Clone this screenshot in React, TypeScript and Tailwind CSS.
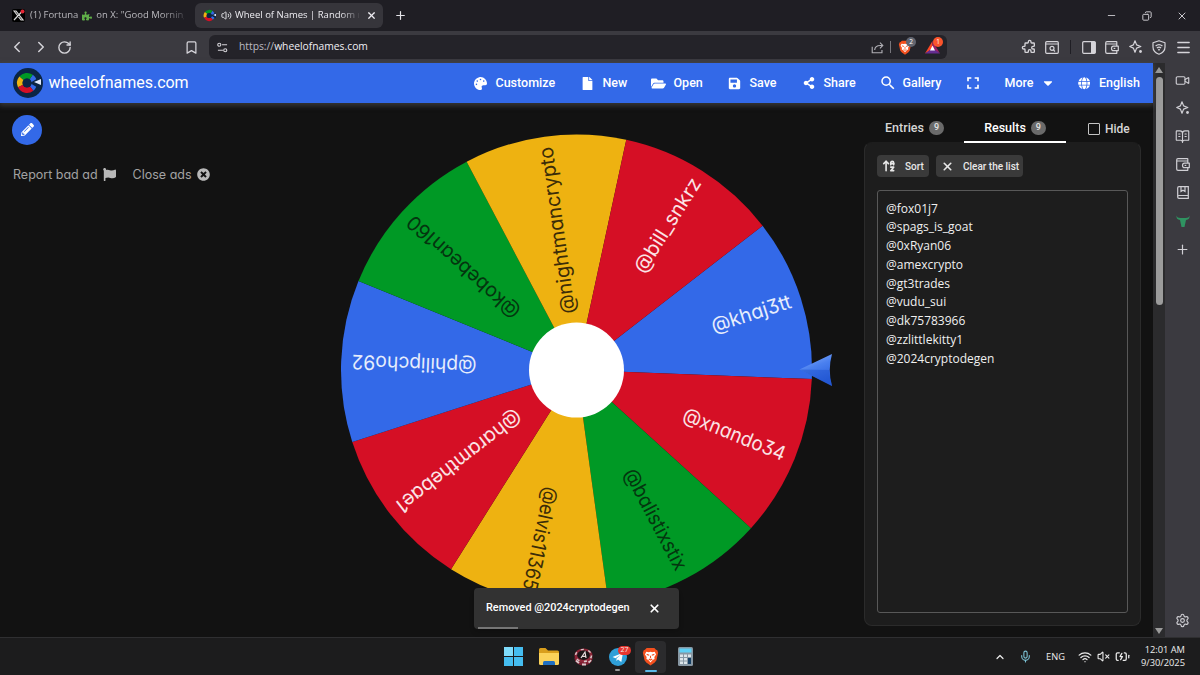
import React, { useState } from 'react';
import {
  ArrowUpAZ,
  BatteryCharging,
  BookOpenText,
  Bookmark,
  ChevronLeft,
  ChevronRight,
  ChevronUp,
  Copy,
  Menu,
  Mic,
  Minus,
  Plus,
  RotateCw,
  Settings,
  Video,
  Volume2,
  VolumeX,
  Wallet,
  Wifi,
  X,
} from 'lucide-react';
import { MdFullscreen, MdSearch } from 'react-icons/md';
import { HiOutlinePuzzle } from 'react-icons/hi';
import {
  FaCaretDown,
  FaFile,
  FaFlag,
  FaFolderOpen,
  FaGlobe,
  FaPalette,
  FaPencilAlt,
  FaPuzzlePiece,
  FaSave,
  FaShareAlt,
  FaTimesCircle,
} from 'react-icons/fa';
import clsx from 'clsx';

interface Slice {
  name: string;
  fill: string;
  ink: string;
  length: number;
}

const BLUE = '#3369e8';
const RED = '#d50f25';
const GREEN = '#009925';
const YELLOW = '#eeb211';

const CX = 236.5;
const CY = 236;
const R = 235.5;
const STEP = 40;
const START = -37.8;

const slices: Slice[] = [
  { name: '@khaj3tt', fill: BLUE, ink: '#e6edfc', length: 83 },
  { name: '@xnando34', fill: RED, ink: '#fbe3e6', length: 109 },
  { name: '@balistixstix', fill: GREEN, ink: '#04350f', length: 112 },
  { name: '@elvis11365', fill: YELLOW, ink: '#3b2c08', length: 105 },
  { name: '@haramthebae1', fill: RED, ink: '#fbe3e6', length: 153 },
  { name: '@philipcho92', fill: BLUE, ink: '#e6edfc', length: 125 },
  { name: '@kobebean160', fill: GREEN, ink: '#04350f', length: 144 },
  { name: '@nightmancrypto', fill: YELLOW, ink: '#3b2c08', length: 168 },
  { name: '@bill_snkrz', fill: RED, ink: '#fbe3e6', length: 108 },
];

const results = [
  '@fox01j7',
  '@spags_is_goat',
  '@0xRyan06',
  '@amexcrypto',
  '@gt3trades',
  '@vudu_sui',
  '@dk75783966',
  '@zzlittlekitty1',
  '@2024cryptodegen',
];

const point = (deg: number) => {
  const rad = (deg * Math.PI) / 180;
  return `${(CX + R * Math.cos(rad)).toFixed(2)} ${(CY + R * Math.sin(rad)).toFixed(2)}`;
};

const Wheel = () => (
  <svg width="496" height="472" viewBox="0 0 496 472" className="block shrink-0">
    <defs>
      <linearGradient id="pointer" x1="0" y1="0" x2="0.4" y2="1">
        <stop offset="0" stopColor="#8fb4fb" />
        <stop offset="0.5" stopColor="#4a80ef" />
        <stop offset="1" stopColor="#2a60dd" />
      </linearGradient>
    </defs>
    {slices.map((s, i) => {
      const a = START + i * STEP;
      return (
        <path
          key={s.name}
          d={`M${CX} ${CY}L${point(a)}A${R} ${R} 0 0 1 ${point(a + STEP)}Z`}
          fill={s.fill}
        />
      );
    })}
    {slices.map((s, i) => (
      <text
        key={s.name}
        x={CX + 225}
        y={CY + 6.5}
        textAnchor="end"
        textLength={s.length}
        lengthAdjust="spacingAndGlyphs"
        transform={`rotate(${START + i * STEP + STEP / 2} ${CX} ${CY})`}
        fill={s.ink}
        className="font-['Inter',sans-serif] text-[20px] [font-feature-settings:'cv11','cv09']"
      >
        {s.name}
      </text>
    ))}
    <circle cx={CX} cy={CY} r="47.5" fill="#fff" />
    <path d="M459.500 235.500L492 220Q487.500 236 492 252Z" fill="url(#pointer)" />
    <path d="M459.500 235.500L492 252Q489.500 244 489.300 236Z" fill="#1c4fc9" opacity="0.45" />
  </svg>
);

const WheelLogo = ({ size, dark = true }: { size: number; dark?: boolean }) => (
  <svg width={size} height={size} viewBox={dark ? '0 0 30 30' : '3 4 23 22'} className="shrink-0">
    {dark && <circle cx="15" cy="15" r="15" fill="#0b2545" />}
    <g fill="none" strokeWidth="5.600">
      <path d="M18.100 9.100A7.200 7.200 0 0 1 18.600 20.500" stroke={BLUE} />
      <path d="M8.500 10.400A7.200 7.200 0 0 1 18.100 9.100" stroke={GREEN} />
      <path d="M7.500 18A7.200 7.200 0 0 1 8.500 10.400" stroke={YELLOW} />
      <path d="M18.600 20.500A7.200 7.200 0 0 1 7.500 18" stroke={RED} />
    </g>
    <circle cx="14" cy="15" r="4.600" fill="#0b2545" />
    <path d="M17 15L26 9.500V20.500Z" fill="#0b2545" />
    <path d="M21 14L28 11V17Z" fill="#dfe9ff" />
  </svg>
);

const BraveLion = ({ className }: { className?: string }) => (
  <svg viewBox="0 0 20 22" className={className}>
    <path d="M5.500 1h9l2 2 1.500 0.500 1 3-0.500 2-1.500 7-2 2.500-5 3.500-5-3.500-2-2.500-1.500-7L1 6.500l1-3L3.500 3z" fill="#f4501e" />
    <path d="M5 5.500l3 0.500 2-0.500 2 0.500 3-0.500 1.500 3-2 3 0.300 2.500-2.300 1-2.500 3-2.500-3-2.300-1 0.300-2.500-2-3z" fill="#fff" />
    <path d="M5.500 8.500l3 1M14.500 8.500l-3 1M10 10v3M8 14l2 1.200 2-1.200" stroke="#f4501e" strokeWidth="1.300" fill="none" />
  </svg>
);

const Slot = ({ className, children }: { className?: string; children?: React.ReactNode }) => (
  <div className={clsx('flex shrink-0 items-center justify-center', className)}>{children}</div>
);

const TabStrip = () => (
  <div className="flex h-[31px] shrink-0 items-center bg-[#1f1e24] text-[9.500px]">
    <div className="ml-3 flex w-[183px] items-center">
      <svg width="13" height="13" viewBox="0 0 13 13" className="mr-[5px] shrink-0">
        <rect width="13" height="13" rx="2" fill="#000" />
        <path d="M2 2l7 9h2L4 2zM10.500 2L2 11" stroke="#d8d8d8" strokeWidth="1.200" fill="none" />
        <circle cx="10.500" cy="2.500" r="2" fill="#e32636" />
      </svg>
      <div className="flex w-[154px] items-center whitespace-pre text-[#b9b8bd] [mask-image:linear-gradient(90deg,#000_85%,rgba(0,0,0,0.250))]">
        <span>(1) Fortuna</span>
        <FaPuzzlePiece className="mx-1 size-[10px] shrink-0 text-[#5fae48]" />
        <span>on X: "Good Morning</span>
      </div>
    </div>
    <div className="flex h-[25px] w-[188px] items-center rounded-md bg-[#36353b] pl-2 text-[#eeedf2]">
      <WheelLogo size={13} dark={false} />
      <Volume2 className="ml-[5px] size-[11px] shrink-0" />
      <span className="ml-[3px] w-[124px] whitespace-nowrap [mask-image:linear-gradient(90deg,#000_85%,rgba(0,0,0,0.100))]">
        Wheel of Names | Random na
      </span>
      <X className="ml-[7px] size-[11px] shrink-0" strokeWidth={2.6} />
    </div>
    <Plus className="ml-[11px] size-[13px] text-[#e4e3e8]" strokeWidth={2.2} />
    <div className="ml-auto flex items-center pr-0.5 text-[#c8c7cc]">
      <Slot className="w-[35px]"><Minus className="size-[11px]" strokeWidth={2} /></Slot>
      <Slot className="w-9"><Copy className="size-[10px] -scale-x-100" strokeWidth={2.4} /></Slot>
      <Slot className="w-[33px]"><X className="size-3" strokeWidth={2} /></Slot>
    </div>
  </div>
);

const Toolbar = () => (
  <div className="flex h-8 shrink-0 items-center bg-[#3b3a40] text-[#d5d4d9]">
    <Slot className="ml-[5px] w-6"><ChevronLeft className="size-[18px]" /></Slot>
    <Slot className="w-[23px]"><ChevronRight className="size-[18px]" /></Slot>
    <Slot className="w-6"><RotateCw className="size-[15px]" strokeWidth={2.2} /></Slot>
    <Slot className="ml-[103px] w-6"><Bookmark className="size-[15px]" /></Slot>
    <div className="ml-[6px] flex h-6 w-[738px] items-center rounded-md bg-[#242329] pl-2 pr-[7px]">
      <svg width="11" height="11" viewBox="0 0 12 12" fill="none" stroke="currentColor" strokeWidth="1.200">
        <circle cx="2.500" cy="3" r="1.700" />
        <path d="M5.500 3H11M1 9H6.500" />
        <circle cx="9" cy="9" r="1.700" />
      </svg>
      <span className="ml-[11px] text-[10.300px] text-[#bcbbc1]">
        https://<span className="text-[#f0eff4]">wheelofnames.com</span>
      </span>
      <svg width="13" height="13" viewBox="0 0 16 16" className="ml-auto" fill="none" stroke="#b0afb5" strokeWidth="1.400">
        <path d="M1.500 7v7.500h12V11M4.500 11Q5 5.500 11.500 5.500H14M11 2l3.500 3.500L11 9" />
      </svg>
      <div className="ml-[6px] h-3 w-px bg-[#77767c]" />
      <div className="relative mr-px ml-[7px]">
        <BraveLion className="h-[15px] w-[14px]" />
        <span className="absolute -top-[3px] left-2 flex size-[10px] items-center justify-center rounded-full bg-[#62656f] text-[6.500px] text-white">2</span>
      </div>
      <div className="relative ml-3">
        <svg width="15" height="14" viewBox="0 0 15 14">
          <path d="M7.500 1L0 13.500L7.500 9Z" fill="#ff4724" />
          <path d="M7.500 1L15 13.500L7.500 9Z" fill="#9e1f63" />
          <path d="M0 13.500H15L7.500 8Z" fill="#662d91" />
          <path d="M7.500 5.500L10 10.500H5Z" fill="#fff" />
        </svg>
        <span className="absolute -top-[3px] left-2 flex size-[10px] items-center justify-center rounded-full bg-[#fb542b] text-[6.500px] text-white">1</span>
      </div>
    </div>
    <div className="ml-auto flex items-center pr-[5px]">
      <Slot className="w-[23px]"><HiOutlinePuzzle className="size-4" /></Slot>
      <Slot className="w-[23px]">
        <svg width="14" height="13" viewBox="0 0 14 13" fill="none" stroke="currentColor" strokeWidth="1.200">
          <rect x="0.700" y="0.700" width="12.600" height="11.600" rx="1" />
          <path d="M0.700 3H13.300M8.500 9L10 10.500" />
          <circle cx="7" cy="7.300" r="2" />
        </svg>
      </Slot>
      <Slot className="w-[14px]"><div className="h-[14px] w-px bg-[#1f1e24]" /></Slot>
      <Slot className="w-[23px]">
        <svg width="14" height="13" viewBox="0 0 14 13">
          <rect x="0.700" y="0.700" width="12.600" height="11.600" rx="1" fill="none" stroke="currentColor" strokeWidth="1.200" />
          <rect x="9" y="1" width="4.500" height="11" fill="currentColor" />
        </svg>
      </Slot>
      <Slot className="w-6"><WalletIcon /></Slot>
      <Slot className="w-[23px]"><SparkleDot /></Slot>
      <Slot className="w-6"><ShieldWifi /></Slot>
      <Slot className="w-6"><Menu className="size-[17px]" strokeWidth={1.9} /></Slot>
    </div>
  </div>
);

const WalletIcon = () => (
  <svg width="14" height="13" viewBox="0 0 14 13" fill="none" stroke="currentColor" strokeWidth="1.200" strokeLinejoin="round">
    <path d="M11.800 3V1.200Q11.800 0.700 11.200 0.700H2Q0.700 0.700 0.700 2V11Q0.700 12.300 2 12.300H11.800V9.800M0.900 3H11.800V5" />
    <path d="M13.300 5.200H8.500Q6.500 5.200 6.500 7.400T8.500 9.600H13.300Z" />
    <path d="M8.600 7.400H10.300" />
  </svg>
);

const SparkleDot = () => (
  <svg width="14" height="14" viewBox="0 0 14 14" fill="none" stroke="currentColor" strokeWidth="1.200" strokeLinejoin="round">
    <path d="M6 0.800L7.600 4.900L11.800 6.500L7.600 8.100L6 12.200L4.400 8.100L0.700 6.500L4.400 4.900Z" />
    <circle cx="11.500" cy="11.500" r="1.400" fill="currentColor" stroke="none" />
  </svg>
);

const ShieldWifi = () => (
  <svg width="14" height="15" viewBox="0 0 14 15" fill="none" stroke="currentColor" strokeWidth="1.200" strokeLinejoin="round">
    <path d="M7 0.800L13 2.800V7Q13 12 7 14.200Q1 12 1 7V2.800Z" />
    <path d="M3.600 6Q7 3.200 10.400 6M4.900 8Q7 6.200 9.100 8" />
    <circle cx="7" cy="9.700" r="0.900" fill="currentColor" stroke="none" />
  </svg>
);

const navItems = [
  { label: 'Customize', icon: FaPalette, size: 'size-[13px]', width: 'w-[107px]' },
  { label: 'New', icon: FaFile, size: 'size-[13px]', width: 'w-[71px]' },
  { label: 'Open', icon: FaFolderOpen, size: 'size-[15px]', width: 'w-[76px]' },
  { label: 'Save', icon: FaSave, size: 'size-[13px]', width: 'w-[74px]' },
  { label: 'Share', icon: FaShareAlt, size: 'size-[12px]', width: 'w-[79px]' },
  { label: 'Gallery', icon: MdSearch, size: 'size-[18px]', width: 'w-[84px]' },
];

const SiteHeader = () => (
  <header className="relative flex h-[39.500px] shrink-0 items-center bg-[#3369e8] text-white shadow-[0_2px_5px_1px_rgba(90,90,90,0.5)]">
    <div className="ml-[12.500px]">
      <WheelLogo size={30} />
    </div>
    <span className="ml-[6px] text-[16px] tracking-[-0.02px]">wheelofnames.com</span>
    <nav className="mr-[0.500px] ml-auto flex items-center pt-px text-[12.500px] font-medium">
      {navItems.map(({ label, icon: Icon, size, width }) => (
        <div key={label} className={clsx('flex items-center', width)}>
          <Slot className="mr-2 w-[14px]"><Icon className={clsx('shrink-0', size)} /></Slot>
          {label}
        </div>
      ))}
      <div className="flex w-10 items-center"><MdFullscreen className="-ml-0.5 size-5" /></div>
      <div className="flex w-[72px] items-center">
        More <FaCaretDown className="ml-[7px] size-[14px]" />
      </div>
      <div className="flex w-[76px] items-center">
        <FaGlobe className="mr-[9px] ml-px size-[12.500px]" /> English
      </div>
    </nav>
  </header>
);

const ResultsPanel = () => {
  const [tab, setTab] = useState<'entries' | 'results'>('results');
  const [hidden, setHidden] = useState(false);

  const tabClass = (active: boolean) =>
    clsx(
      'flex h-[29px] items-center justify-center border-b-2 pt-px text-[12.500px] font-medium',
      active ? 'border-white text-white' : 'border-transparent text-[#d6d6d6]'
    );

  return (
    <section className="ml-auto mr-3 flex w-[277px] flex-col pt-[11.500px]">
      <div className="relative flex items-center">
        <button className={clsx(tabClass(tab === 'entries'), 'w-[100px] pl-px')} onClick={() => setTab('entries')}>
          Entries
          <Badge />
        </button>
        <button className={clsx(tabClass(tab === 'results'), 'w-[102px]')} onClick={() => setTab('results')}>
          Results
          <Badge />
        </button>
        <button className="ml-[22px] flex items-center text-xs font-medium text-[#d6d6d6]" onClick={() => setHidden(!hidden)}>
          <span className="mr-[5px] size-3 rounded-[1px] border-[1.500px] border-[#c4c4c4]" />
          Hide
        </button>
      </div>
      <div className="-mt-px flex h-[484px] flex-col rounded-lg border border-[#2b2b2b] border-t-[#1d1d1d] bg-[#1d1d1d] p-3 pt-[12px]">
        <div className="flex gap-[7px] text-[10px] font-medium text-[#e8e8e8]">
          <button className="flex h-[22px] w-[52px] items-center rounded bg-[#3a3a3a] pl-[5px]">
            <ArrowUpAZ className="size-[14px]" strokeWidth={2.8} />
            <span className="ml-[9px]">Sort</span>
          </button>
          <button className="flex h-[22px] w-[87px] items-center rounded bg-[#3a3a3a] pl-[5px]">
            <X className="size-[13px]" strokeWidth={3} />
            <span className="ml-[9px] whitespace-nowrap">Clear the list</span>
          </button>
        </div>
        {!hidden && (
          <ul className="mt-[12.500px] w-[251px] flex-1 rounded-[3px] border border-[#585858] pt-[9px] pl-2 font-['Open_Sans','Noto_Sans',sans-serif] text-[12px] leading-[18.750px] text-[#f0f0f0]">
            {results.map((name) => (
              <li key={name}>{name}</li>
            ))}
          </ul>
        )}
      </div>
    </section>
  );
};

const Badge = () => (
  <span className="ml-[5px] flex h-[14px] w-[15px] items-center justify-center rounded-[7px] bg-[#6a6a6a] text-[9px] text-[#e4e4e4]">
    9
  </span>
);

const Toast = () => (
  <div className="absolute top-[485px] left-[474px] flex h-[41px] w-[205px] items-center rounded bg-[#323232] pt-px pl-3 text-[10.900px] font-medium text-white shadow-md">
    <span className="whitespace-nowrap">Removed @2024cryptodegen</span>
    <X className="ml-[18px] size-[13px]" strokeWidth={3.2} />
    <span className="absolute bottom-0 left-1 h-0.5 w-10 bg-[#767676]" />
  </div>
);

const Page = () => (
  <div className="relative flex w-[1153px] flex-col bg-[#121212] font-['Roboto',sans-serif]">
    <SiteHeader />
    <div className="relative flex min-h-0 flex-1">
      <div className="w-[340px] shrink-0 pt-3 pl-3">
        <div className="flex size-[30px] items-center justify-center rounded-full bg-[#3369e8] text-white">
          <FaPencilAlt className="size-[13px]" />
        </div>
        <div className="mt-[21px] flex items-center pl-px font-['Inter',sans-serif] text-[12.500px] leading-[18px] text-[#a2a2a2] [font-feature-settings:'cv11']">
          Report bad ad <FaFlag className="ml-[5px] size-[13px] text-[#b8b8b8]" />
          <span className="ml-[17px]">Close ads</span>
          <FaTimesCircle className="ml-[5px] size-[13px] text-[#b8b8b8]" />
        </div>
      </div>
      <div className="flex w-[496px] shrink-0 overflow-hidden pt-[31px]">
        <Wheel />
      </div>
      <ResultsPanel />
      <Toast />
    </div>
  </div>
);

const ScrollBar = () => (
  <div className="flex w-3 shrink-0 flex-col items-center bg-[#2b2b2d] pt-1 pb-[3px]">
    <div className="h-0 w-0 border-x-4 border-b-[6px] border-x-transparent border-b-[#9a9a9a]" />
    <div className="mt-1 h-[228px] w-[7px] rounded-full bg-[#9c9c9c]" />
    <div className="mt-auto h-0 w-0 border-x-4 border-t-[6px] border-x-transparent border-t-[#9a9a9a]" />
  </div>
);

const SideBar = () => (
  <aside className="flex flex-1 flex-col items-center bg-[#3b3a40] pt-[3px] pb-[3px] text-[#d0cfd4]">
    <Slot className="h-[28.200px]"><Video className="size-[15px]" strokeWidth={1.8} /></Slot>
    <Slot className="h-[28.200px]"><SparkleDot /></Slot>
    <Slot className="h-[28.200px]"><BookOpenText className="size-[15px]" strokeWidth={1.8} /></Slot>
    <Slot className="h-[28.200px]"><WalletIcon /></Slot>
    <Slot className="h-[28.200px]">
      <svg width="12" height="13" viewBox="0 0 12 13" fill="none" stroke="currentColor" strokeWidth="1.200">
        <path d="M11.300 9.500H2Q0.700 9.500 0.700 11Q0.700 12.400 2 12.400H11.300V0.700H2Q0.700 0.700 0.700 2V11M4 0.700V5.500L6 4.300L8 5.500V0.700" />
      </svg>
    </Slot>
    <Slot className="h-[28.200px]">
      <svg width="14" height="13" viewBox="0 0 14 13">
        <path d="M0.500 0.500Q1 3 4.500 3H9.500Q13 3 13.500 0.500Q14 4.500 10 5L8.500 12H5.500L4 5Q0 4.500 0.500 0.500Z" fill="#2f9361" />
      </svg>
    </Slot>
    <Slot className="h-[28.200px]"><Plus className="size-[15px]" strokeWidth={1.9} /></Slot>
    <Settings className="mt-auto mb-[6px] size-[15px]" strokeWidth={1.8} />
  </aside>
);

const TaskBar = () => (
  <footer className="relative flex h-[38px] shrink-0 items-center border-t border-[#2f2f31] bg-[#1c1c1d] text-[#ececec]">
    <div className="ml-[496px] flex h-full items-center">
      <Slot className="w-[35px]">
        <svg width="19" height="19" viewBox="0 0 19 19">
          <path d="M0 0H9V9H0zM10 0H19V9H10zM0 10H9V19H0zM10 10H19V19H10z" fill="#45bdf0" />
          <path d="M0 0H9V9H0z" fill="#7fdcfb" />
        </svg>
      </Slot>
      <Slot className="w-[35px]">
        <svg width="20" height="17" viewBox="0 0 20 17">
          <path d="M0 1.500Q0 0 1.500 0H6.500L9 2.500H18.500Q20 2.500 20 4V8H0z" fill="#d99e1c" />
          <path d="M0 5H20V15.500Q20 17 18.500 17H1.500Q0 17 0 15.500z" fill="#fbd25a" />
          <path d="M4 17V14.500Q4 13 5.500 13H14.500Q16 13 16 14.500V17z" fill="#1f6fc2" />
        </svg>
      </Slot>
      <Slot className="w-[34px]">
        <svg width="19" height="18" viewBox="0 0 19 18">
          <ellipse cx="9.500" cy="10.500" rx="9" ry="7" fill="#7d1f31" />
          <path d="M2 12.500L5 15M8 16.500H12M14.500 14.500L17 12" stroke="#d9c9cc" strokeWidth="2" />
          <ellipse cx="9.500" cy="7.500" rx="9" ry="7" fill="#8e2638" />
          <ellipse cx="9.500" cy="7.500" rx="8" ry="6" fill="none" stroke="#d8c9cb" strokeWidth="1.500" strokeDasharray="3 4.500" />
          <ellipse cx="9.500" cy="7.200" rx="6.300" ry="4.800" fill="#1c1517" />
          <path d="M7 10L11 4L12 10M8 8.300H12" stroke="#e8dcdc" strokeWidth="1.200" fill="none" />
        </svg>
      </Slot>
      <Slot className="relative h-full w-[35px]">
        <svg width="18" height="18" viewBox="0 0 18 18">
          <circle cx="9" cy="9" r="9" fill="#2f9fd8" />
          <path d="M3.500 9L14 4.800L12.300 14L9 11.500L7.500 13V10.500L11.500 7L6.500 10.200z" fill="#fff" />
        </svg>
        <span className="absolute top-[8px] left-[18px] flex h-[9px] w-[13px] items-center justify-center rounded-full bg-[#e8362f] text-[7px]">27</span>
        <span className="absolute bottom-[4px] h-[2px] w-[5px] rounded-full bg-[#9a9a9a]" />
      </Slot>
      <Slot className="relative h-8 w-[31px] rounded bg-[#2b2b2d]">
        <BraveLion className="h-[19px] w-[17px]" />
        <span className="absolute bottom-px h-[2px] w-3 rounded-full bg-[#5ab9e8]" />
      </Slot>
      <Slot className="ml-[2px] w-[34px]">
        <svg width="15" height="19" viewBox="0 0 15 19">
          <rect width="15" height="19" rx="1.500" fill="#8797a3" />
          <rect x="1.500" y="1.500" width="12" height="4" fill="#5ed0f5" />
          <path d="M2 7.500h3v2.500H2zM6 7.500h3v2.500H6zM2 11h3v2.500H2zM6 11h3v2.500H6zM2 14.500h3v2.500H2zM6 14.500h3v2.500H6zM10 7.500h3v2.500h-3z" fill="#dce5ea" />
          <path d="M10 11h3v6h-3z" fill="#163f63" />
        </svg>
      </Slot>
    </div>
    <div className="ml-auto flex items-center pr-[15px] font-['Open_Sans','Noto_Sans',sans-serif] text-[9.300px]">
      <ChevronUp className="size-3" strokeWidth={2.4} />
      <Mic className="ml-[13px] size-[13px] text-[#7cc3d6]" />
      <span className="ml-[14px]">ENG</span>
      <Wifi className="ml-[13px] size-[14px]" strokeWidth={2.2} />
      <VolumeX className="ml-[5px] size-[13px]" />
      <BatteryCharging className="ml-[5px] size-[15px]" />
      <div className="ml-[8px] w-[47px] text-right leading-[12.500px] whitespace-nowrap">
        12:01 AM
        <br />
        9/30/2025
      </div>
    </div>
  </footer>
);

const App = () => (
  <div className="flex h-[675px] w-[1200px] flex-col overflow-hidden bg-[#121212] font-['Open_Sans','Noto_Sans',sans-serif]">
    <TabStrip />
    <Toolbar />
    <main className="flex min-h-0 flex-1">
      <Page />
      <ScrollBar />
      <SideBar />
    </main>
    <TaskBar />
  </div>
);

export default App;
